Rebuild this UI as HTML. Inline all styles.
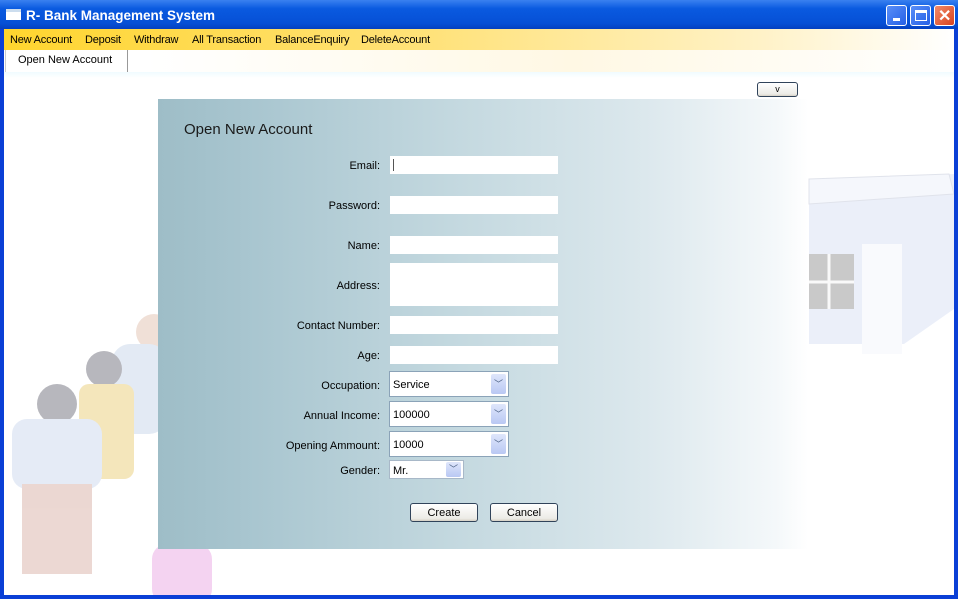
<!DOCTYPE html>
<html><head><style>
*{margin:0;padding:0;box-sizing:border-box}
body{width:958px;height:599px;overflow:hidden;background:#0a3fd6;font-family:"Liberation Sans",sans-serif;font-size:11px;color:#000;position:relative}
.a{position:absolute}
#title{left:0;top:0;width:958px;height:29px;background:linear-gradient(#3a81f0,#0a5ae0 30%,#0650d6 80%,#0440c0);color:#fff;font-weight:bold;font-size:14px}
#client{left:4px;top:29px;width:950px;height:566px;background:#fff;overflow:hidden}
#menu{left:0;top:0;width:950px;height:21px;background:linear-gradient(90deg,#ffd52e 0%,#ffe27a 45%,#fff2c8 80%,#fff 100%)}
#menu span{position:absolute;top:5px;font-size:11px;letter-spacing:-0.2px}
.lbl{position:absolute;text-align:right;width:200px;font-size:11px}
.in{position:absolute;background:#fff;left:390px;width:168px;height:18px}
.cb{position:absolute;background:#fff;border:1px solid #8ba3b8;left:389px;height:26px;font-size:11px;padding:7px 0 0 3px}
.cb i{position:absolute;right:2px;top:2px;width:15px;height:20px;background:linear-gradient(#dfe6fb,#b9c8f3);border-radius:2px;font-style:normal;color:#4d6185;font-size:9px;text-align:center;line-height:20px}
.btn{position:absolute;height:19px;border:1px solid #30435a;border-radius:3px;background:linear-gradient(#fff,#ecebe6 85%,#d6d0c5);text-align:center;font-size:11px;line-height:19px}
.wb{position:absolute;top:5px;width:21px;height:21px;border:1px solid #fff;border-radius:3px;background:linear-gradient(135deg,#5a8ff8,#2560e6)}
</style></head><body>
<div id="title" class="a">
 <div class="a" style="left:6px;top:9px;width:15px;height:11px;background:#fff;border-top:3px solid #cde"></div>
 <div class="a" style="left:26px;top:8px;font-size:13.5px">R- Bank Management System</div>
 <div class="wb" style="left:886px"><div class="a" style="left:6px;top:12px;width:7px;height:3px;background:#fff"></div></div>
 <div class="wb" style="left:910px"><div class="a" style="left:4px;top:4px;width:12px;height:11px;border:1px solid #fff;border-top:3px solid #fff"></div></div>
 <div class="wb" style="left:934px;background:linear-gradient(135deg,#f08a6a,#d8431e)"><div class="a" style="left:3px;top:0;color:#fff;font-size:16px;font-weight:bold">✕</div></div>
</div>
<div id="client" class="a">
 <div id="menu" class="a">
  <span style="left:6px">New Account</span><span style="left:81px">Deposit</span><span style="left:130px">Withdraw</span><span style="left:188px">All Transaction</span><span style="left:271px">BalanceEnquiry</span><span style="left:357px">DeleteAccount</span>
 </div>
 <div class="a" style="left:0;top:21px;width:950px;height:24px;background:linear-gradient(90deg,#fff 0%,#fff 15%,#fff8e4 60%,#fff 100%)"></div>
 <div class="a" style="left:1px;top:21px;width:123px;height:22px;background:#fff;border-right:1px solid #999;border-left:1px solid #ccc"><div class="a" style="left:12px;top:4px;font-size:11px">Open New Account</div></div>
 <div class="a" style="left:0;top:43px;width:950px;height:6px;background:linear-gradient(#f0fbff,#fff)"></div>
 <svg class="a" style="left:0;top:120px" width="950" height="450">
  <g opacity="0.35">
   <polygon points="805,30 950,25 950,160 900,195 805,195" fill="#c8d2ee"/>
   <polygon points="805,30 945,25 950,45 805,55" fill="#e4e9f8" stroke="#a8b0c8"/>
   <rect x="805" y="105" width="45" height="55" fill="#666"/>
   <line x1="805" y1="133" x2="850" y2="133" stroke="#eee" stroke-width="3"/><line x1="825" y1="105" x2="825" y2="160" stroke="#eee" stroke-width="3"/>
   <rect x="858" y="95" width="40" height="110" fill="#eef1fb"/>
   <circle cx="150" cy="183" r="18" fill="#d6a890"/>
   <rect x="108" y="195" width="55" height="90" rx="18" fill="#b0c6e0"/>
   <circle cx="100" cy="220" r="18" fill="#334"/>
   <rect x="75" y="235" width="55" height="95" rx="10" fill="#e0b840"/>
   <circle cx="53" cy="255" r="20" fill="#334"/>
   <rect x="8" y="270" width="90" height="70" rx="15" fill="#b6c8e6"/>
   <rect x="18" y="335" width="70" height="90" fill="#c89080"/>
   <rect x="148" y="395" width="60" height="60" rx="15" fill="#e080d8"/>
  </g>
 </svg>
 <div class="a" style="left:154px;top:70px;width:650px;height:450px;background:linear-gradient(90deg,#9ebdc7 0%,#a9c6d0 15%,#c3d8df 45%,#dce8ed 75%,#f4f8fa 95%,rgba(255,255,255,0) 100%)"></div>
 <div class="btn" style="left:753px;top:53px;width:41px;height:15px;line-height:12px;font-size:9px">v</div>
 <div class="a" style="left:180px;top:92px;font-size:15px;color:#1a1a1a">Open New Account</div>
 <div class="lbl" style="left:176px;top:131px">Email:</div>
 <div class="lbl" style="left:176px;top:171px">Password:</div>
 <div class="lbl" style="left:176px;top:211px">Name:</div>
 <div class="lbl" style="left:176px;top:251px">Address:</div>
 <div class="lbl" style="left:176px;top:291px">Contact Number:</div>
 <div class="lbl" style="left:176px;top:321px">Age:</div>
 <div class="lbl" style="left:176px;top:351px">Occupation:</div>
 <div class="lbl" style="left:176px;top:381px">Annual Income:</div>
 <div class="lbl" style="left:176px;top:411px">Opening Ammount:</div>
 <div class="lbl" style="left:176px;top:436px">Gender:</div>
 <div class="in" style="left:386px;top:127px"><div class="a" style="left:3px;top:3px;width:1px;height:12px;background:#555"></div></div>
 <div class="in" style="left:386px;top:167px"></div>
 <div class="in" style="left:386px;top:207px"></div>
 <div class="in" style="left:386px;top:234px;height:43px"></div>
 <div class="in" style="left:386px;top:287px"></div>
 <div class="in" style="left:386px;top:317px"></div>
 <div class="cb" style="left:385px;top:342px;width:120px">Service<i>﹀</i></div>
 <div class="cb" style="left:385px;top:372px;width:120px">100000<i>﹀</i></div>
 <div class="cb" style="left:385px;top:402px;width:120px">10000<i>﹀</i></div>
 <div class="cb" style="left:385px;top:431px;width:75px;height:19px;border-color:#a8b8c8;padding-top:4px">Mr.<i style="top:1px;height:15px;line-height:15px">﹀</i></div>
 <div class="btn" style="left:406px;top:474px;width:68px">Create</div>
 <div class="btn" style="left:486px;top:474px;width:68px">Cancel</div>
</div>
</body></html>
